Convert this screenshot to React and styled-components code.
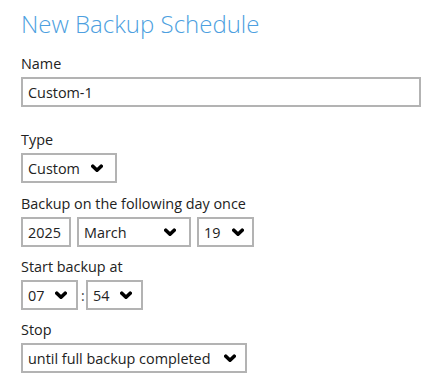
import React from "react";
import styled, { createGlobalStyle } from "styled-components";

const GlobalStyle = createGlobalStyle`
  body {
    margin: 0;
    background: #ffffff;
    font-family: "Open Sans", "Noto Sans", sans-serif;
    color: #222;
  }
`;

const Page = styled.div`
  padding: 5px 21px 0 21px;
  width: 436px;
  box-sizing: border-box;
`;

const Title = styled.h1`
  margin: 0 0 12px 0;
  font-size: 24px;
  font-weight: 300;
  color: #4d9fe0;
  line-height: 37px;
`;

const Field = styled.div`
  margin-bottom: ${(p) => p.$gap || 10}px;
`;

const Label = styled.div`
  font-size: 14.4px;
  line-height: 20px;
  margin-bottom: 3px;
  color: #222;
`;

const TextBox = styled.div`
  width: ${(p) => p.$w}px;
  height: 30px;
  box-sizing: border-box;
  border: 2px solid #b3b3b3;
  padding: 0 5px;
  display: flex;
  align-items: center;
  font-size: 14.4px;
`;

const SelectBox = styled(TextBox)`
  justify-content: space-between;
  padding-right: ${(p) => p.$pr || 12}px;
`;

const Row = styled.div`
  display: flex;
  align-items: center;
  gap: ${(p) => p.$gap || 6}px;
`;

const Colon = styled.span`
  font-size: 14px;
  width: 2px;
  color: #444;
`;

const Chevron = () => (
  <svg width="12" height="9" viewBox="0 0 12 9">
    <polyline
      points="1.8,2.2 6,6.2 10.2,2.2"
      fill="none"
      stroke="#000"
      strokeWidth="3.6"
      strokeLinecap="round"
      strokeLinejoin="round"
    />
  </svg>
);

const Select = ({ w, pr, children }) => (
  <SelectBox $w={w} $pr={pr}>
    <span>{children}</span>
    <Chevron />
  </SelectBox>
);

export default function App() {
  return (
    <Page>
      <GlobalStyle />
      <Title>New Backup Schedule</Title>
      <Field $gap={23}>
        <Label>Name</Label>
        <TextBox $w={400}>Custom-1</TextBox>
      </Field>
      <Field $gap={11}>
        <Label>Type</Label>
        <Select w={96}>Custom</Select>
      </Field>
      <Field>
        <Label>Backup on the following day once</Label>
        <Row>
          <TextBox $w={50}>2025</TextBox>
          <Select w={114} pr={13}>March</Select>
          <Select w={57} pr={8}>19</Select>
        </Row>
      </Field>
      <Field>
        <Label>Start backup at</Label>
        <Row $gap={3}>
          <Select w={57} pr={9}>07</Select>
          <Colon>:</Colon>
          <Select w={57} pr={9}>54</Select>
        </Row>
      </Field>
      <Field>
        <Label>Stop</Label>
        <Select w={226} pr={9}>until full backup completed</Select>
      </Field>
    </Page>
  );
}
